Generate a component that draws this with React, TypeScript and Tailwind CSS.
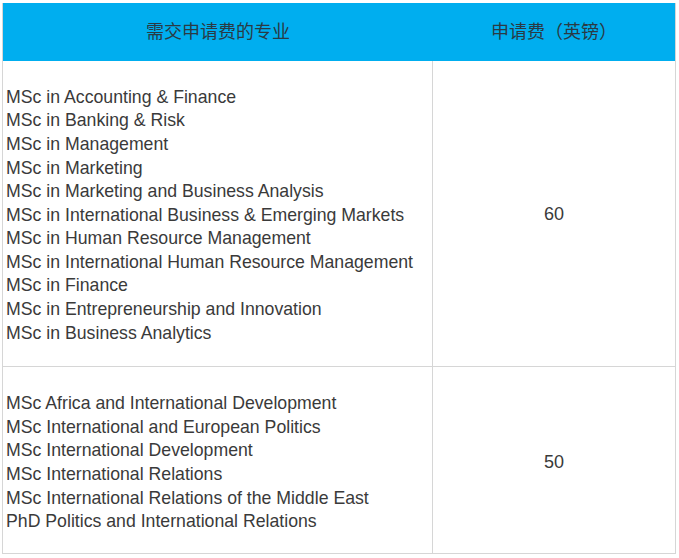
import React from "react";

const group1 = [
  "MSc in Accounting & Finance",
  "MSc in Banking & Risk",
  "MSc in Management",
  "MSc in Marketing",
  "MSc in Marketing and Business Analysis",
  "MSc in International Business & Emerging Markets",
  "MSc in Human Resource Management",
  "MSc in International Human Resource Management",
  "MSc in Finance",
  "MSc in Entrepreneurship and Innovation",
  "MSc in Business Analytics",
];

const group2 = [
  "MSc Africa and International Development",
  "MSc International and European Politics",
  "MSc International Development",
  "MSc International Relations",
  "MSc International Relations of the Middle East",
  "PhD Politics and International Relations",
];

export default function App() {
  return (
    <div
      className="w-[679px] h-[558px] bg-white pt-[3px] pl-[2px] pr-[3px] text-[#3a3a3a]"
      style={{ fontFamily: '"Liberation Sans", "Noto Sans CJK SC", sans-serif' }}
    >
      <div className="grid grid-cols-[430px_1fr] border-l border-b border-r border-[#d6d6d6]">
        <div className="h-[58px] bg-[#00aeef] flex items-center justify-center text-[18px] text-[#2a3a44]">
          需交申请费的专业
        </div>
        <div className="h-[58px] bg-[#00aeef] flex items-center justify-center text-[18px] text-[#2a3a44]">
          申请费（英镑）
        </div>
        <div className="h-[305px] border-r border-[#d6d6d6] flex flex-col justify-center pl-[3px] text-[17.7px] leading-[23.6px] pt-[4px]">
          {group1.map((t) => (
            <div key={t} className="whitespace-nowrap">{t}</div>
          ))}
        </div>
        <div className="h-[305px] flex items-center justify-center text-[18px] pt-[2px]">60</div>
        <div className="h-[187px] border-t border-r border-[#d6d6d6] flex flex-col justify-center pl-[3px] text-[17.7px] leading-[23.6px] pt-[6px]">
          {group2.map((t) => (
            <div key={t} className="whitespace-nowrap">{t}</div>
          ))}
        </div>
        <div className="h-[187px] border-t border-[#d6d6d6] flex items-center justify-center text-[18px] pt-[4px]">
          50
        </div>
      </div>
    </div>
  );
}
